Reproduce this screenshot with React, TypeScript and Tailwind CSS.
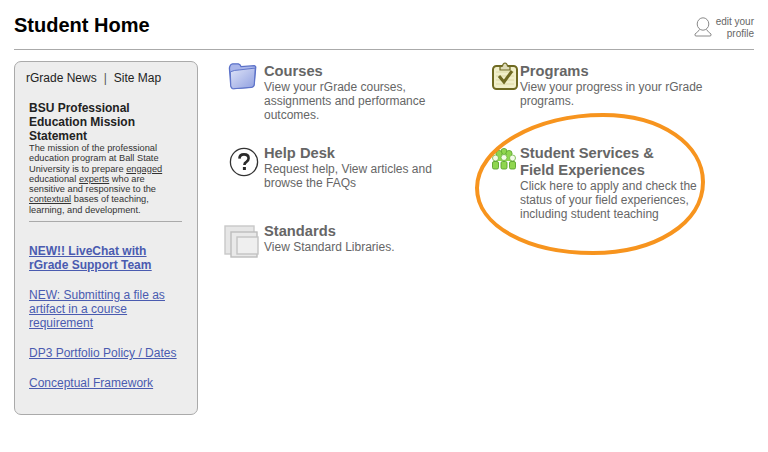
import React from "react";

const FolderIcon = () => (
  <svg width="30" height="29" viewBox="0 0 32 30" className="shrink-0">
    <defs>
      <linearGradient id="fg" x1="0" y1="0" x2="1" y2="1">
        <stop offset="0" stopColor="#dfe4f8" />
        <stop offset="1" stopColor="#8f9fe0" />
      </linearGradient>
    </defs>
    <path d="M1.5 6 Q2 2 5 1.5 L11 1.5 Q13 2 14 4.5 L28 3.5 Q30 4 29.5 6 L28 23 Q28 26 25 26.5 L6 28 Q3.5 28 3 25 Z" fill="#aab6ea" stroke="#5a70c8" strokeWidth="1.4" />
    <path d="M2.5 10 Q7 8 12 8 L29 6 L28 23 Q28 26 25 26.5 L6 28 Q3.5 28 3 25 Z" fill="url(#fg)" stroke="#5a70c8" strokeWidth="1" />
  </svg>
);

const HelpIcon = () => (
  <svg width="30" height="30" viewBox="0 0 30 30" className="shrink-0">
    <circle cx="15" cy="15" r="13.6" fill="#fff" stroke="#333" strokeWidth="1.3" />
    <path d="M10.4 11.6 Q10.6 7.4 15 7.4 Q19.6 7.4 19.6 11.2 Q19.6 13.4 17.4 14.8 Q15.4 16 15.4 18" fill="none" stroke="#2b2b2b" strokeWidth="2.6" />
    <rect x="13.9" y="20" width="3" height="3" fill="#2b2b2b" />
  </svg>
);

const StandardsIcon = () => (
  <svg width="36" height="34" viewBox="0 0 36 34" className="shrink-0">
    <rect x="1" y="1" width="29" height="28" fill="#e6e6e6" stroke="#c8c8c8" strokeWidth="1.4" />
    <rect x="7" y="7" width="26" height="25" fill="#e9e9e9" stroke="#bdbdbd" strokeWidth="1.4" />
    <rect x="13" y="12" width="21" height="17" fill="#efefef" stroke="#c4c4c4" strokeWidth="1.4" />
  </svg>
);

const ProgramsIcon = () => (
  <svg width="26" height="28" viewBox="0 0 26 28" className="shrink-0">
    <rect x="1" y="4" width="24" height="23" rx="3.5" fill="#f1efc9" stroke="#6f6a22" strokeWidth="2" />
    <path d="M4 10h18M4 14h18M4 18h18M4 22h18" stroke="#dcd9a6" strokeWidth="1" />
    <path d="M8 5 L10.5 4 Q11 1 13 1 Q15 1 15.5 4 L18 5 L18 8 L8 8 Z" fill="#dedbb8" stroke="#6f6a22" strokeWidth="1.2" />
    <path d="M7 14 L12 20 L20 9" fill="none" stroke="#6f6a22" strokeWidth="3" />
  </svg>
);

const back: [number, number][] = [[12, 3.5], [7, 5.5], [17, 5.5]];
const front: [number, number][] = [[3.5, 10], [12, 9.5], [20.5, 10]];
const StudentIcon = () => (
  <svg width="24" height="22" viewBox="0 0 24 22" className="shrink-0">
    {back.map(([x, y], i) => (
      <circle key={i} cx={x} cy={y} r="3.1" fill="#8fd64f" stroke="#5aa22c" strokeWidth="0.8" />
    ))}
    <rect x="5" y="7" width="14" height="6" fill="#8fd64f" />
    {front.map(([x, y], i) => (
      <circle key={i} cx={x} cy={y} r="3" fill="#f4fbe9" stroke="#6ab53a" strokeWidth="0.8" />
    ))}
    <rect x="0.5" y="13.5" width="6" height="7.5" rx="1.5" fill="#8fd64f" stroke="#5aa22c" strokeWidth="0.9" />
    <rect x="9" y="13.5" width="6" height="7.5" rx="1.5" fill="#8fd64f" stroke="#5aa22c" strokeWidth="0.9" />
    <rect x="17.5" y="13.5" width="6" height="7.5" rx="1.5" fill="#8fd64f" stroke="#5aa22c" strokeWidth="0.9" />
  </svg>
);

const ProfileIcon = () => (
  <svg width="18" height="20" viewBox="0 0 18 20" className="shrink-0">
    <ellipse cx="9" cy="7" rx="5.8" ry="6.2" fill="none" stroke="#8a8a8a" strokeWidth="1" />
    <path d="M5.5 12.5 Q4 15 1 17 Q0.5 19 2 19 L16 19 Q17.5 19 17 17 Q14 15 12.5 12.5" fill="none" stroke="#8a8a8a" strokeWidth="1" />
  </svg>
);

function Item({ icon, title, lines, iconBox }: { icon: React.ReactNode; title: string[]; lines: string[]; iconBox: string }) {
  return (
    <div className="flex">
      <div className={iconBox}>{icon}</div>
      <div>
        {title.map((t) => (
          <div key={t} className="text-[14.7px] leading-[17px] font-bold text-[#666]">{t}</div>
        ))}
        {lines.map((l) => (
          <div key={l} className="text-[12px] leading-[14px] text-[#666] whitespace-nowrap">{l}</div>
        ))}
      </div>
    </div>
  );
}

export default function App() {
  return (
    <div className="relative w-[768px] h-[452px] bg-white overflow-hidden px-[14px] font-['Liberation_Sans',Arial,sans-serif]">
      <div className="flex justify-between h-[50px] border-b border-[#aaa]">
        <h1 className="pt-[13px] text-[20px] leading-[24px] font-bold text-black">Student Home</h1>
        <div className="flex pt-[11px] gap-[4px] -ml-[1px]">
          <div className="pt-[6px]"><ProfileIcon /></div>
          <div className="text-[10px] leading-[11.5px] text-right text-[#666] pt-[5px]">edit your<br />profile</div>
        </div>
      </div>
      <div className="flex mt-[11px]">
        <aside className="w-[184px] h-[354px] shrink-0 rounded-[7px] border border-[#aaa] bg-[#ededed]">
          <div className="pl-[11px] pt-[9px] text-[12px] leading-[15px] text-[#222] whitespace-nowrap">
            rGrade News<span className="mx-[7px] text-[#555]">|</span>Site Map
          </div>
          <div className="ml-[14px] mr-[15px] mt-[15px]">
            <div className="text-[12px] leading-[14px] font-bold text-[#222]">BSU Professional<br />Education Mission<br />Statement</div>
            <div className="text-[9.25px] leading-[10.3px] text-[#333] whitespace-nowrap">
              The mission of the professional<br />
              education program at Ball State<br />
              University is to prepare <span className="underline">engaged</span><br />
              educational <span className="underline">experts</span> who are<br />
              sensitive and responsive to the<br />
              <span className="underline">contextual</span> bases of teaching,<br />
              learning, and development.
            </div>
            <div className="mt-[6px] border-t border-[#aaa]" />
            <div className="mt-[22px] text-[12px] leading-[14px] text-[#4a5bb0] underline">
              <a className="block font-bold whitespace-nowrap">NEW!! LiveChat with<br />rGrade Support Team</a>
              <a className="block mt-[16px] whitespace-nowrap">NEW: Submitting a file as<br />artifact in a course<br />requirement</a>
              <a className="block mt-[16px] whitespace-nowrap">DP3 Portfolio Policy / Dates</a>
              <a className="block mt-[16px] whitespace-nowrap">Conceptual Framework</a>
            </div>
          </div>
        </aside>
        <main className="flex">
          <div className="ml-[30px] w-[264px] pt-[2px]">
            <Item iconBox="w-[36px] -mt-[1px]" icon={<FolderIcon />} title={["Courses"]} lines={["View your rGrade courses,", "assignments and performance", "outcomes."]} />
            <div className="mt-[23px]">
              <Item iconBox="w-[36px] pt-[2px] pl-[1px]" icon={<HelpIcon />} title={["Help Desk"]} lines={["Request help, View articles and", "browse the FAQs"]} />
            </div>
            <div className="mt-[33px] -ml-[4px]">
              <Item iconBox="w-[40px] pt-[2px]" icon={<StandardsIcon />} title={["Standards"]} lines={["View Standard Libraries."]} />
            </div>
          </div>
          <div className="pt-[2px]">
            <Item iconBox="w-[28px] -mt-[1px]" icon={<ProgramsIcon />} title={["Programs"]} lines={["View your progress in your rGrade", "programs."]} />
            <div className="mt-[37px]">
              <Item iconBox="w-[28px] pt-[3px]" icon={<StudentIcon />} title={["Student Services &", "Field Experiences"]} lines={["Click here to apply and check the", "status of your field experiences,", "including student teaching"]} />
            </div>
          </div>
        </main>
      </div>
      <svg width="240" height="150" viewBox="0 0 240 150" className="absolute left-[470px] top-[110px] pointer-events-none">
        <path d="M7 78 C7 38 66 5 133 5 C192 5 233 35 233 72 C233 114 184 143 123 143 C58 143 7 116 7 78 Z" fill="none" stroke="#f7941e" strokeWidth="4" />
      </svg>
    </div>
  );
}
